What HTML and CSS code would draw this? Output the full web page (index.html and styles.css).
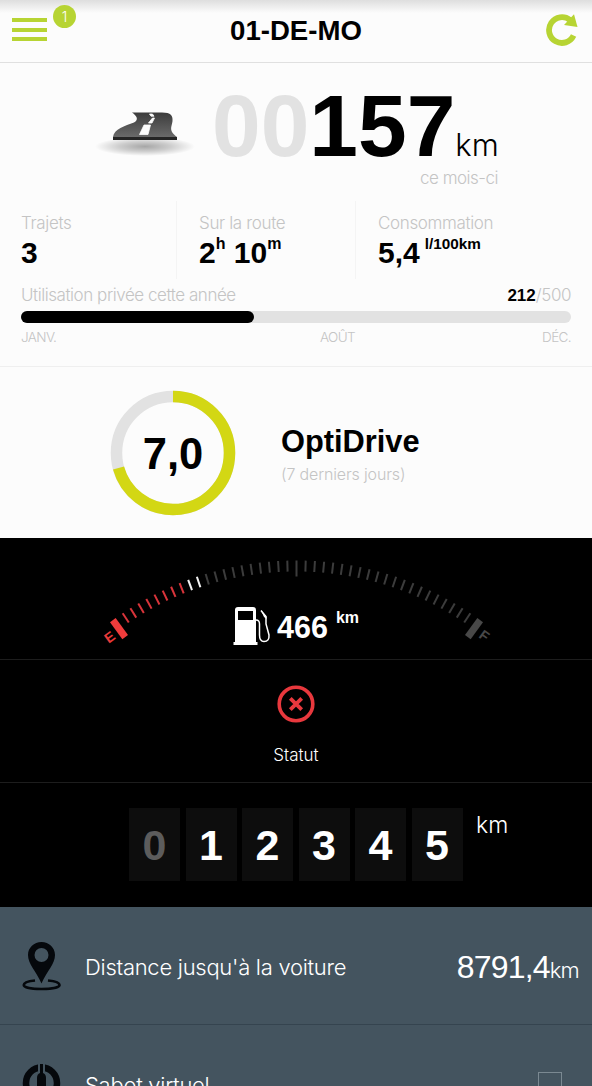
FILE: index.html
```html
<!DOCTYPE html>
<html lang="fr">
<head>
  <meta charset="UTF-8" />
  <meta name="viewport" content="width=device-width, initial-scale=1.0"/>
  <title>01-DE-MO</title>
  <link rel="stylesheet" href="styles.css">
</head>
<body>
  <header class="topbar">
    <div class="menu">
      <span class="menu-icon"><i></i><i></i><i></i></span>
      <span class="badge">1</span>
    </div>
    <h1>01-DE-MO</h1>
    <svg class="refresh" viewBox="0 0 34 34" width="34" height="34">
      <path d="M28.6 22.600A12.900 12.900 0 1 1 25 7" fill="none" stroke="#b7d433" stroke-width="5.800"/>
      <path d="M29 1.300L32.500 14L19 12Z" fill="#b7d433"/>
    </svg>
  </header>

  <section class="trip">
    <div class="distance">
      <svg class="road" viewBox="0 0 104 50" width="104" height="50">
        <defs>
          <linearGradient id="asphalt" x1="0" y1="0" x2="0" y2="1">
            <stop offset="0" stop-color="#3c3c3c"/>
            <stop offset="1" stop-color="#6a6a6a"/>
          </linearGradient>
          <radialGradient id="shadow">
            <stop offset="0" stop-color="#000" stop-opacity=".34"/>
            <stop offset=".5" stop-color="#000" stop-opacity=".19"/>
            <stop offset="1" stop-color="#000" stop-opacity="0"/>
          </radialGradient>
        </defs>
        <ellipse cx="51" cy="39.500" rx="50" ry="9.500" fill="url(#shadow)"/>
        <path d="M19 30C20 22 31 19 40 15.500C45 13 43 9 38 5.600H68C77 5.600 79 9 78.500 14C78 20 74 23 83 30Z" fill="url(#asphalt)"/>
        <path d="M19 30H83V33H19Z" fill="#252525"/>
        <path d="M55.500 7H58.500L60 9.200H57ZM58.500 11H60.500L58 16H54.500ZM50 18H56.500L54 27.500H45.500Z" fill="#fcfcfc" stroke="#fcfcfc" stroke-width=".8"/>
      </svg>
      <div>
        <div class="odo"><span class="zeros">00</span>157<span class="unit">km</span></div>
        <div class="period">ce mois-ci</div>
      </div>
    </div>

    <div class="stats">
      <div class="stat">
        <span class="label">Trajets</span>
        <strong>3</strong>
      </div>
      <div class="stat">
        <span class="label">Sur la route</span>
        <strong>2<sup>h</sup> 10<sup>m</sup></strong>
      </div>
      <div class="stat">
        <span class="label">Consommation</span>
        <strong>5,4<sup class="per">l/100km</sup></strong>
      </div>
    </div>

    <div class="usage">
      <div class="usage-head">
        <span class="usage-label">Utilisation privée cette année</span>
        <span class="quota"><b>212</b>/500</span>
      </div>
      <div class="bar"><div class="bar-fill" style="width: 42.400%"></div></div>
      <div class="months"><span>JANV.</span><span class="current">AOÛT</span><span>DÉC.</span></div>
    </div>
  </section>

  <section class="optidrive">
    <div class="score">
      <svg viewBox="0 0 126 126" width="126" height="126">
        <circle cx="63" cy="63" r="56.500" fill="none" stroke="#e2e2e2" stroke-width="11.500"/>
        <circle cx="63" cy="63" r="56.500" fill="none" stroke="#d3d714" stroke-width="11.500" pathLength="100" stroke-dasharray="70.700 100" transform="rotate(-90 63 63)"/>
      </svg>
      <span>7,0</span>
    </div>
    <div class="opti-text">
      <h2>OptiDrive</h2>
      <p>(7 derniers jours)</p>
    </div>
  </section>

  <section class="fuel">
    <svg class="gauge" viewBox="0 0 592 120" width="592" height="120">
      <g id="ticks"></g>
      <text class="gauge-letter" x="0" y="0" fill="#e93a3a" transform="translate(109.500 99) rotate(-36)">E</text>
      <text class="gauge-letter" x="0" y="0" fill="#484848" transform="translate(484.500 97.500) rotate(36)">F</text>
    </svg>
    <div class="range">
      <svg viewBox="0 0 38 40" width="38" height="40">
        <path d="M5 1H20Q23 1 23 4V36H24.500V39H.500V36H2V4Q2 1 5 1Z" fill="#fff"/>
        <path d="M5 5H20V14H5Z" fill="#000"/>
        <path d="M23 14Q26.500 14 26.500 18V29Q26.500 35.500 31 35.500Q36.500 35.500 36 29L33 18V11L28 4.500" fill="none" stroke="#fff" stroke-width="1.500"/>
        <path d="M28 4L33.500 10V13L31 11Z" fill="#fff"/>
      </svg>
      <span class="range-value">466</span><span class="range-unit">km</span>
    </div>
  </section>

  <section class="status">
    <svg viewBox="0 0 38 38" width="38" height="38">
      <circle cx="19" cy="19" r="16.800" fill="none" stroke="#e8383d" stroke-width="3.600"/>
      <path d="M13.300 13.300L24.700 24.700M24.700 13.300L13.300 24.700" stroke="#e8383d" stroke-width="3.800"/>
    </svg>
    <span>Statut</span>
  </section>

  <section class="odometer">
    <span class="digit off">0</span>
    <span class="digit">1</span>
    <span class="digit">2</span>
    <span class="digit">3</span>
    <span class="digit">4</span>
    <span class="digit">5</span>
    <span class="odometer-unit">km</span>
  </section>

  <ul class="list">
    <li>
      <svg viewBox="0 0 40 50" width="40" height="50">
        <path d="M13 39.500C6 40.200 1.800 41.800 1.800 44C1.800 46.800 10 48 19.500 48S37.500 46.800 37.500 44C37.500 41.800 33 40.200 26 39.500" fill="none" stroke="#05080c" stroke-width="2.700"/>
        <path fill-rule="evenodd" d="M19.500 1C12 1 6 6.600 6 14C6 23 14 30 19.500 42.500C25 30 33 23 33 14C33 6.600 27 1 19.500 1ZM19.500 7A7 7 0 1 1 19.500 21A7 7 0 1 1 19.500 7Z" fill="#05080c"/>
      </svg>
      <span class="item-label">Distance jusqu'à la voiture</span>
      <span class="item-value">8791,4<small>km</small></span>
    </li>
    <li>
      <svg viewBox="0 0 40 50" width="40" height="50">
        <circle cx="19.500" cy="24" r="15.500" fill="none" stroke="#05080c" stroke-width="6.500"/>
        <path d="M16 4H23V17H16Z" fill="#44545f"/>
        <path d="M18 5H21V14Q24 15 24 19V40H15V19Q15 15 18 14Z" fill="#05080c"/>
      </svg>
      <span class="item-label">Sabot virtuel</span>
      <span class="checkbox"></span>
    </li>
  </ul>

  <script>
    // fuel gauge: 20 ticks on each side of the middle, a thick bar at both ends
    const ticks = document.getElementById("ticks");
    const step = 1.69;

    function addTick(i, length, width, color) {
      const line = document.createElementNS("http://www.w3.org/2000/svg", "line");
      line.setAttribute("x1", 296.5);
      line.setAttribute("x2", 296.5);
      line.setAttribute("y1", 22.5);
      line.setAttribute("y2", 22.5 + length);
      line.setAttribute("stroke", color);
      line.setAttribute("stroke-width", width);
      line.setAttribute("transform", `rotate(${i * step} 296.5 335)`);
      ticks.appendChild(line);
    }

    for (let i = -20; i <= 20; i++) {
      let color = "#3c3c3c";
      if (i <= -13) color = "#d8343a";
      else if (i <= -11) color = "#f2f2f2";
      addTick(i, i === 0 ? 16 : 11, 2, color);
    }
    addTick(-21.3, 21, 7, "#f03c3c");
    addTick(21.3, 21, 7, "#484848");
  </script>
</body>
</html>
```
FILE: styles.css
```css
* {
  box-sizing: border-box;
}

body {
  margin: 0;
  height: 1086px;
  overflow: hidden;
  background-color: #fcfcfc;
  color: #000;
  font-family: 'Liberation Sans', Arial, sans-serif;
}

h1, h2, p {
  margin: 0;
}

svg {
  display: block;
  flex-shrink: 0;
}

.topbar {
  display: grid;
  grid-template-columns: 100px 1fr 100px;
  height: 63px;
  border-bottom: 1px solid #e0e0e0;
  background: linear-gradient(#dedede, #fcfcfc 13px);
}

.topbar h1 {
  font-size: 27.6px;
  line-height: 61px;
  text-align: center;
}

.menu {
  display: flex;
  gap: 6px;
  padding-left: 12px;
}

.menu-icon {
  display: flex;
  flex-direction: column;
  gap: 5.5px;
  width: 35px;
  padding-top: 18px;
}

.menu-icon i {
  height: 4px;
  background-color: #b7d433;
}

.badge {
  width: 23px;
  height: 23px;
  margin-top: 5px;
  border-radius: 50%;
  background-color: #b7d433;
  color: #fff;
  font-family: Inter, sans-serif;
  font-weight: 300;
  font-size: 14px;
  line-height: 24px;
  text-align: center;
}

.refresh {
  justify-self: end;
  margin: 13px 13px 0 0;
}

.trip {
  height: 304px;
  border-bottom: 1px solid #efefef;
}

.distance {
  display: flex;
  height: 138px;
  padding: 21px 0 0 94px;
  gap: 14px;
}

.road {
  margin-top: 23px;
}

.odo {
  height: 84px;
  font-size: 87.5px;
  font-weight: bold;
  line-height: 84px;
  white-space: nowrap;
}

.zeros {
  color: #e2e2e2;
}

.unit, .period, .label, .usage-label, .quota, .months, .opti-text p,
.item-label, .item-value small, .status span, .odometer-unit {
  font-family: Inter, 'Liberation Sans', sans-serif;
  font-weight: 300;
}

.unit {
  font-size: 31px;
  line-height: 1;
}

.period {
  width: 286px;
  color: #c4c4c4;
  font-size: 17px;
  letter-spacing: -0.5px;
  line-height: 20px;
  text-align: right;
}

.stats {
  display: grid;
  grid-template-columns: 177px 179px 1fr;
  height: 78px;
}

.stat {
  padding: 11px 0 0 22px;
  border-right: 1px solid #f4f4f4;
}

.stat:first-child {
  padding-left: 21px;
}

.stat:last-child {
  border-right: none;
}

.label {
  display: block;
  color: #c4c4c4;
  font-size: 17px;
  letter-spacing: -0.35px;
  line-height: 22px;
}

.stat strong {
  display: block;
  font-size: 30px;
  line-height: 37px;
  white-space: nowrap;
}

.stat sup {
  font-size: 16px;
  line-height: 0;
  vertical-align: 14px;
}

.stat .per {
  margin-left: 5px;
  font-size: 15.3px;
}

.usage {
  padding: 5px 21px 0;
}

.usage-head {
  display: flex;
  justify-content: space-between;
  color: #c4c4c4;
  font-size: 17px;
  letter-spacing: -0.45px;
  line-height: 22px;
}

.quota b {
  color: #000;
  font-family: 'Liberation Sans', Arial, sans-serif;
  font-weight: bold;
  letter-spacing: 0;
}

.bar {
  height: 12px;
  margin-top: 4px;
  border-radius: 6px;
  background-color: #e2e2e2;
}

.bar-fill {
  height: 12px;
  border-radius: 6px;
  background-color: #000;
}

.months {
  display: grid;
  grid-template-columns: 299px 1fr auto;
  margin-top: 5px;
  color: #c4c4c4;
  font-size: 13.5px;
  letter-spacing: -0.6px;
  line-height: 18px;
}

.optidrive {
  display: flex;
  height: 171px;
  padding: 23px 0 0 110px;
  gap: 45px;
}

.score {
  display: grid;
  width: 126px;
  height: 126px;
  place-items: center;
}

.score > * {
  grid-area: 1 / 1;
}

.score span {
  padding-top: 2px;
  font-size: 43.5px;
  font-weight: bold;
}

.opti-text {
  padding-top: 34px;
}

.opti-text h2 {
  font-size: 30.8px;
  line-height: 36px;
}

.opti-text p {
  color: #c4c4c4;
  font-size: 16px;
  letter-spacing: -0.15px;
  line-height: 28px;
}

.fuel, .status, .odometer {
  background-color: #000;
  color: #fff;
}

.fuel {
  display: grid;
  height: 122px;
  border-bottom: 1px solid #1d1d1d;
}

.fuel > * {
  grid-area: 1 / 1;
}

.gauge-letter {
  font-family: 'Liberation Sans', Arial, sans-serif;
  font-size: 14px;
  font-weight: bold;
  text-anchor: middle;
  dominant-baseline: central;
}

.range {
  display: flex;
  padding: 68px 0 0 233px;
  font-weight: bold;
}

.range-value {
  margin-left: 6px;
  font-size: 30.5px;
  line-height: 43px;
}

.range-unit {
  margin-left: 8px;
  font-size: 16px;
  line-height: 24px;
}

.status {
  display: flex;
  flex-direction: column;
  align-items: center;
  height: 123px;
  padding-top: 25px;
  border-bottom: 1px solid #1d1d1d;
}

.status span {
  margin-top: 21px;
  font-size: 17px;
  line-height: 22px;
}

.odometer {
  display: flex;
  height: 124px;
  padding: 25px 0 0 129px;
  gap: 5.500px;
}

.digit {
  width: 51px;
  height: 73px;
  background-color: #0d0d0d;
  font-size: 43px;
  font-weight: bold;
  line-height: 75px;
  text-align: center;
}

.off {
  color: #5c5c5c;
}

.odometer-unit {
  margin-left: 8px;
  font-size: 23px;
  line-height: 34px;
}

.list {
  height: 179px;
  margin: 0;
  padding: 0;
  overflow: hidden;
  background-color: #44545f;
  color: #fff;
  list-style: none;
}

.list li {
  display: flex;
  align-items: center;
  height: 118px;
  padding: 0 13px 0 22px;
  border-bottom: 1px solid #35444f;
}

.item-label {
  margin-left: 23px;
  padding-top: 2px;
  font-size: 22px;
  letter-spacing: -0.28px;
}

.item-value {
  margin-left: auto;
  padding-top: 3px;
  font-size: 32px;
  letter-spacing: -0.8px;
}

.item-value small {
  font-size: 22px;
}

.checkbox {
  width: 24px;
  height: 24px;
  margin: 0 17px 0 auto;
  border: 1px solid #7b8992;
}
```
